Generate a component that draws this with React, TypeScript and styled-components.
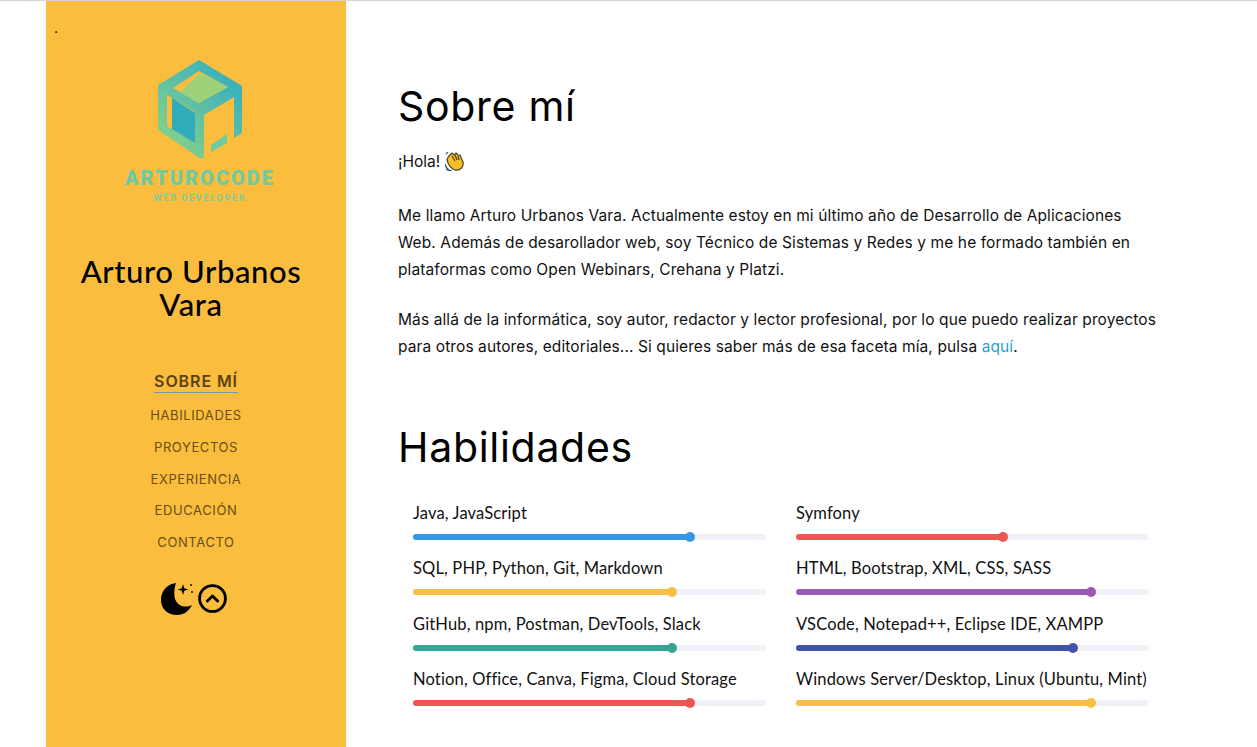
import styled, { createGlobalStyle } from "styled-components";
import { CircleChevronUp } from "lucide-react";

const skills = [
  { name: "Java, JavaScript", level: 78.5, color: "#3498e8" },
  { name: "Symfony", level: 58.6, color: "#ee5555" },
  { name: "SQL, PHP, Python, Git, Markdown", level: 73.5, color: "#f7bf45" },
  { name: "HTML, Bootstrap, XML, CSS, SASS", level: 83.6, color: "#9b59b6" },
  { name: "GitHub, npm, Postman, DevTools, Slack", level: 73.5, color: "#33a693" },
  { name: "VSCode, Notepad++, Eclipse IDE, XAMPP", level: 78.5, color: "#4354a8" },
  { name: "Notion, Office, Canva, Figma, Cloud Storage", level: 78.5, color: "#ee5555" },
  { name: "Windows Server/Desktop, Linux (Ubuntu, Mint)", level: 83.6, color: "#f7bf45" },
];

const navItems = ["Habilidades", "Proyectos", "Experiencia", "Educación", "Contacto"];

const Logo = () => (
  <svg width="86" height="100" viewBox="0 0 86 100">
    <defs>
      <linearGradient id="cube" x1="0.9" y1="0.15" x2="0.2" y2="0.9">
        <stop offset="0" stopColor="#36afbf" />
        <stop offset="0.5" stopColor="#5cbfa6" />
        <stop offset="1" stopColor="#84d08a" />
      </linearGradient>
    </defs>
    <path
      d="M42 1 L85 27 V74 L77 79 V38 L47 56 V98 L44 100 L1 71 V26 Z M42 12 L16 29 L42 44 L71 28 Z M10 36 L38 53 V84 L10 67 Z"
      fill="url(#cube)"
      fillRule="evenodd"
    />
    <path d="M43 14 L71 28 L41 44 L23 33 Z" fill="#9dd27a" />
    <path d="M15 39 L38 54 V84 L15 70 Z" fill="#2fabba" />
    <path d="M54 86 L70 75 V84 L54 93 Z" fill="#6ecb9c" />
  </svg>
);

const Moon = () => (
  <svg width="36" height="36" viewBox="0 0 36 36">
    <path
      d="M16 2 C7 3 1 10 1 19 C1 28 8 34 17 34 C24 34 29 30 32 24 C24 28 16 24 14.500 16 C14 11 14.500 6 16 2 Z"
      fill="#000"
    />
    <path d="M23 3 L24.300 7.200 L28.500 8.500 L24.300 9.800 L23 14 L21.700 9.800 L17.500 8.500 L21.700 7.200 Z" fill="#000" />
    <circle cx="31" cy="4" r="0.9" fill="#000" />
    <circle cx="32" cy="11" r="0.9" fill="#000" />
  </svg>
);

const Hand = () => (
  <svg width="19" height="19" viewBox="0 0 19 19">
    <path
      d="M4 4 L7 1 L9 3 L11 1 L13 3 L15 3 L18 10 C19 15 15 19 10 18 C7 17 5 15 3 11 L2 7 Z"
      fill="#f7bd2a"
      stroke="#4a4420"
      strokeWidth="1.2"
    />
    <path d="M0 12 C1 15 3 18 7 19 L2 18 Z" fill="#2f5f7f" stroke="#2f5f7f" />
    <path d="M1 2 L3 0" stroke="#2f5f7f" strokeWidth="1.2" />
    <path d="M7 4 L10 9 M10 3 L12 8 M13 4 L14 8" stroke="#4a4420" strokeWidth="1.2" />
  </svg>
);

export default function App() {
  return (
    <>
      <GlobalStyle />
      <Page>
        <Sidebar>
          <Dot>.</Dot>
          <LogoBlock>
            <Logo />
            <LogoName>ARTUROCODE</LogoName>
            <LogoTag>WEB DEVELOPER</LogoTag>
          </LogoBlock>
          <Name>Arturo Urbanos Vara</Name>
          <Nav>
            <ActiveLink>Sobre mí</ActiveLink>
            {navItems.map((item) => (
              <NavLink key={item}>{item}</NavLink>
            ))}
          </Nav>
          <Tools>
            <Moon />
            <CircleChevronUp size={31} color="#000" strokeWidth={2.2} />
          </Tools>
        </Sidebar>
        <Main>
          <Title>Sobre mí</Title>
          <Greeting>
            ¡Hola! <Hand />
          </Greeting>
          <Text>
            Me llamo Arturo Urbanos Vara. Actualmente estoy en mi último año de Desarrollo de
            Aplicaciones Web. Además de desarollador web, soy Técnico de Sistemas y Redes y me he
            formado también en plataformas como Open Webinars, Crehana y Platzi.
          </Text>
          <Text>
            Más allá de la informática, soy autor, redactor y lector profesional, por lo que puedo
            realizar proyectos para otros autores, editoriales... Si quieres saber más de esa faceta
            mía, pulsa <Anchor href="#">aquí</Anchor>.
          </Text>
          <SkillsTitle>Habilidades</SkillsTitle>
          <SkillGrid>
            {skills.map((skill) => (
              <Skill key={skill.name}>
                <SkillName>{skill.name}</SkillName>
                <Track>
                  <Fill $color={skill.color} style={{ width: `${skill.level}%` }} />
                </Track>
              </Skill>
            ))}
          </SkillGrid>
        </Main>
      </Page>
    </>
  );
}

const GlobalStyle = createGlobalStyle`
  html, body {
    margin: 0;
    height: 100%;
    overflow: hidden;
    background: #fff;
  }
  * {
    box-sizing: border-box;
  }
`;

const Page = styled.div`
  display: flex;
  height: 747px;
  padding-left: 46px;
  border-top: 1px solid #d4d4d4;
  font-family: "Inter", "Liberation Sans", sans-serif;
`;

const Sidebar = styled.aside`
  position: relative;
  width: 300px;
  flex-shrink: 0;
  background: #fabd3d;
  display: flex;
  flex-direction: column;
  align-items: center;
  padding-top: 58px;
`;

const Dot = styled.span`
  position: absolute;
  top: 18px;
  left: 8px;
  font-size: 14px;
  color: #000;
`;

const LogoBlock = styled.div`
  display: flex;
  flex-direction: column;
  align-items: center;
  margin-left: 8px;
`;

const LogoName = styled.div`
  margin-top: 7px;
  font-family: "Roboto", sans-serif;
  font-weight: 900;
  font-size: 20px;
  line-height: 24px;
  letter-spacing: 2px;
  color: #6fc9a2;
`;

const LogoTag = styled.div`
  margin-top: 3px;
  font-family: "Roboto", sans-serif;
  font-weight: 700;
  font-size: 9px;
  line-height: 11px;
  letter-spacing: 1.700px;
  color: #7fcb92;
`;

const Name = styled.h2`
  margin: 51px 10px 0 0;
  width: 240px;
  text-align: center;
  font-family: "Lato", sans-serif;
  font-weight: 500;
  font-size: 31px;
  line-height: 33px;
  letter-spacing: 0.6px;
  color: #000;
`;

const Nav = styled.nav`
  display: flex;
  flex-direction: column;
  align-items: center;
  margin-top: 49px;
`;

const ActiveLink = styled.a`
  font-size: 16px;
  font-weight: 600;
  line-height: 22px;
  letter-spacing: 0.9px;
  text-transform: uppercase;
  color: #5b4212;
  border-bottom: 1.500px solid #6f9fa0;
  margin-bottom: 13px;
`;

const NavLink = styled.a`
  font-size: 13px;
  line-height: 18px;
  letter-spacing: 0.6px;
  text-transform: uppercase;
  color: #6b4e14;
  margin-bottom: 13.800px;
`;

const Tools = styled.div`
  display: flex;
  align-items: center;
  gap: 1px;
  margin: 16px 4px 0 0;
`;

const Main = styled.main`
  flex: 1;
  padding: 80px 96px 0 52px;
  color: #111;
`;

const Title = styled.h1`
  margin: 0;
  font-weight: 400;
  font-size: 41px;
  line-height: 50px;
  letter-spacing: 0.7px;
  color: #000;
`;

const Greeting = styled.p`
  display: flex;
  align-items: center;
  gap: 5px;
  margin: 17px 0 0;
  font-size: 15.500px;
  line-height: 27px;
`;

const Text = styled.p`
  margin: 27px 0 0;
  font-size: 15.500px;
  line-height: 27px;
  letter-spacing: 0.1px;
  & + & {
    margin-top: 23px;
  }
`;

const Anchor = styled.a`
  color: #2b9fd0;
  text-decoration: none;
`;

const SkillsTitle = styled(Title)`
  margin-top: 62px;
`;

const SkillGrid = styled.div`
  display: grid;
  grid-template-columns: 353px 353px;
  column-gap: 30px;
  margin: 29px 0 0 15px;
`;

const Skill = styled.div`
  height: 55.300px;
`;

const SkillName = styled.div`
  font-family: "Lato", sans-serif;
  font-size: 16.500px;
  line-height: 24px;
  letter-spacing: 0.15px;
  white-space: nowrap;
  color: #111;
`;

const Track = styled.div`
  margin-top: 9px;
  height: 6px;
  border-radius: 3px;
  background: #f1f1f8;
`;

const Fill = styled.div<{ $color: string }>`
  position: relative;
  height: 100%;
  border-radius: 3px;
  background: ${({ $color }) => $color};
  &::after {
    content: "";
    position: absolute;
    right: -5px;
    top: -2px;
    width: 10px;
    height: 10px;
    border-radius: 50%;
    background: ${({ $color }) => $color};
  }
`;
